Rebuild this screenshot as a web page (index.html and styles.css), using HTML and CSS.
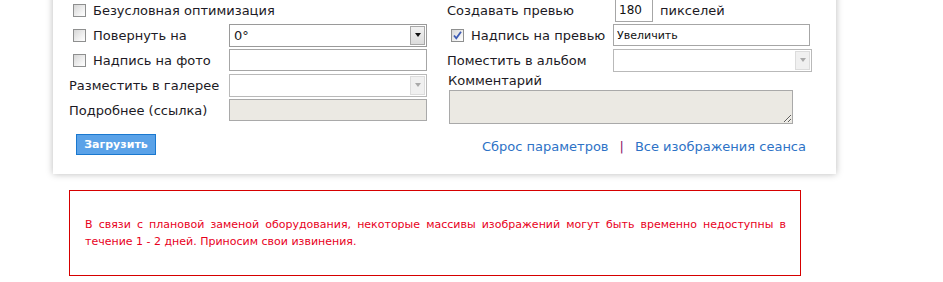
FILE: index.html
```html
<!DOCTYPE html>
<html lang="ru">
<head>
    <meta charset="UTF-8">
    <title>Загрузка изображений</title>
    <link rel="stylesheet" href="styles.css">
</head>
<body>
    <div class="panel">
        <div class="col col-left">
            <div class="row">
                <span class="cb"></span>
                <span class="label">Безусловная оптимизация</span>
            </div>
            <div class="row">
                <span class="cb"></span>
                <span class="label label-short">Повернуть на</span>
                <div class="select">
                    <span class="select-value">0°</span>
                    <span class="select-arrow"></span>
                </div>
            </div>
            <div class="row">
                <span class="cb"></span>
                <span class="label label-short">Надпись на фото</span>
                <input class="field" type="text">
            </div>
            <div class="row">
                <span class="label label-wide">Разместить в галерее</span>
                <div class="select disabled">
                    <span class="select-value"></span>
                    <span class="select-arrow"></span>
                </div>
            </div>
            <div class="row">
                <span class="label label-wide">Подробнее (ссылка)</span>
                <input class="field" type="text" disabled>
            </div>
            <button class="btn">Загрузить</button>
        </div>

        <div class="col col-right">
            <div class="row">
                <span class="label label-r">Создавать превью</span>
                <input class="field field-num" type="text" value="180">
                <span class="label unit">пикселей</span>
            </div>
            <div class="row">
                <span class="cb checked">
                    <svg width="11" height="11" viewBox="0 0 11 11"><path d="M2 5.5 L4.3 8.3 L9 1.8" fill="none" stroke="#3d5bb4" stroke-width="1.8"/></svg>
                </span>
                <span class="label label-rc">Надпись на превью</span>
                <input class="field field-r field-small" type="text" value="Увеличить">
            </div>
            <div class="row">
                <span class="label label-r2">Поместить в альбом</span>
                <div class="select select-r disabled">
                    <span class="select-value"></span>
                    <span class="select-arrow"></span>
                </div>
            </div>
            <div class="comment-title">Комментарий</div>
            <textarea class="comment" disabled></textarea>
            <div class="links">
                <a href="#">Сброс параметров</a>
                <span class="sep">|</span>
                <a href="#">Все изображения сеанса</a>
            </div>
        </div>
    </div>

    <div class="notice">
        В связи с плановой заменой оборудования, некоторые массивы изображений могут быть временно недоступны в течение 1 - 2 дней. Приносим свои извинения.
    </div>
</body>
</html>
```

FILE: styles.css
```css
body {
    margin: 0;
    background: #fff;
    font-family: "DejaVu Sans", Verdana, sans-serif;
    font-size: 13px;
    color: #1c1a24;
}

.panel {
    display: flex;
    width: 783px;
    margin: -10px 0 0 53px;
    padding: 9px 0 19px 0;
    background: #fff;
    box-shadow: 0 0 7px rgba(0, 0, 0, 0.28);
}

.col {
    display: flex;
    flex-direction: column;
}

.col-left {
    width: 358px;
    margin-left: 16px;
}

.col-right {
    width: 365px;
    margin-left: 20px;
}

.row {
    display: flex;
    align-items: center;
    height: 22px;
    margin-bottom: 3px;
}

.cb {
    width: 11px;
    height: 11px;
    margin: 0 7px 0 4px;
    border: 1px solid #8e8f8f;
    background: linear-gradient(135deg, #d6d6d6 0%, #f4f4f4 70%, #fff 100%);
    display: flex;
    align-items: center;
    justify-content: center;
    flex-shrink: 0;
}

.label {
    white-space: nowrap;
}

.label-short {
    width: 136px;
}

.label-wide {
    width: 160px;
}

.label-r {
    width: 168px;
}

.label-rc {
    width: 142px;
}

.label-r2 {
    width: 166px;
}

.unit {
    margin-left: 7px;
}

.select {
    display: flex;
    width: 196px;
    height: 19px;
    border: 1px solid #9a9a9a;
    background: #fff;
    padding: 1px 0;
}

.select-value {
    flex: 1;
    padding-left: 4px;
    line-height: 19px;
    font-size: 13px;
}

.select-arrow {
    width: 13px;
    height: 17px;
    margin-right: 1px;
    border: 1px solid #a8a8a8;
    background: linear-gradient(#f2f2f2, #dcdcdc);
    display: flex;
    align-items: center;
    justify-content: center;
}

.select-arrow::after {
    content: "";
    border-left: 3px solid transparent;
    border-right: 3px solid transparent;
    border-top: 4px solid #111;
}

.select.disabled {
    border-color: #b9b9b9;
}

.select.disabled .select-arrow {
    background: #f0f0f0;
    border-color: #dcdcdc;
}

.select.disabled .select-arrow::after {
    border-top-color: #a9a9a9;
}

.select-r {
    width: 197px;
}

.field {
    box-sizing: border-box;
    width: 198px;
    height: 22px;
    margin: 0;
    padding: 0 3px;
    border: 1px solid #a6a6a6;
    background: #fff;
    font-family: "DejaVu Sans", Verdana, sans-serif;
    font-size: 12px;
    color: #111;
}

.field:disabled {
    background: #ebe9e3;
    border-color: #a9a9a9;
}

.field-num {
    width: 38px;
    height: 23px;
}

.field-r {
    width: 197px;
}

.field-small {
    font-size: 11px;
}

.btn {
    align-self: flex-start;
    margin: 10px 0 0 7px;
    width: 80px;
    height: 21px;
    padding: 0;
    border: 1px solid #1a78cf;
    background: #5aa2e8;
    color: #fff;
    font-family: "DejaVu Sans", Verdana, sans-serif;
    font-size: 11px;
    font-weight: bold;
    cursor: pointer;
}

.comment-title {
    margin: 0 0 0 1px;
    line-height: 14px;
}

.comment {
    box-sizing: border-box;
    width: 344px;
    height: 34px;
    margin: 2px 0 0 2px;
    border: 1px solid #a9a9a9;
    background: #ebe9e3;
    resize: vertical;
    display: block;
}

.links {
    display: flex;
    justify-content: flex-end;
    margin: 15px 6px 0 0;
    font-size: 13px;
}

.links a {
    color: #2d72c6;
    text-decoration: none;
}

.sep {
    color: #8a1468;
    margin: 0 11px;
}

.notice {
    width: 701px;
    margin: 16px 0 0 69px;
    padding: 25px 14px 25px 15px;
    border: 1px solid #d60000;
    color: #e8001c;
    font-size: 11px;
    line-height: 17px;
    text-align: justify;
}
```
